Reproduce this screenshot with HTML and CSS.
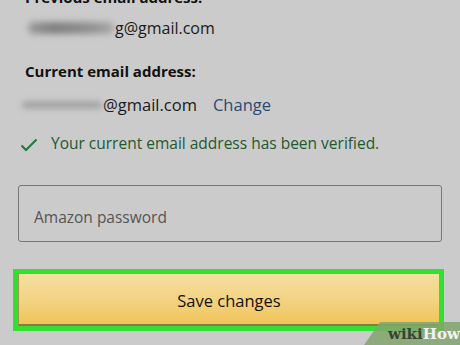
FILE: index.html
```html
<!DOCTYPE html>
<html>
<head>
<meta charset="utf-8">
<link rel="stylesheet" href="styles.css">
</head>
<body>
<div class="page">
  <div class="label cut">Previous email address:</div>
  <div class="email first"><span class="blur blur-a"></span><span>g@gmail.com</span></div>
  <div class="label current">Current email address:</div>
  <div class="email second"><span class="blur blur-b"></span><span>@gmail.com</span><a class="change">Change</a></div>
  <div class="verified">
    <svg class="check" width="18" height="14" viewBox="0 0 18 14"><path d="M1.5 7.5 L6 12 L16.5 1.5" fill="none" stroke="#1f7a3a" stroke-width="2"/></svg>
    <span>Your current email address has been verified.</span>
  </div>
  <div class="input">Amazon password</div>
  <div class="highlight">
    <div class="button">Save changes</div>
  </div>
</div>
<div class="wm"><span class="wiki">wiki</span><span class="how">How</span></div>
</body>
</html>
```
FILE: styles.css
```css
html, body {
  margin: 0;
  padding: 0;
  width: 460px;
  height: 345px;
  overflow: hidden;
  background: #cbcbcb;
}
body {
  font-family: "Open Sans", "Noto Sans", sans-serif;
  color: #111;
  position: relative;
}
.page {
  display: flex;
  flex-direction: column;
}
.label {
  font-weight: 700;
  font-size: 15px;
  line-height: 20px;
  padding-left: 25px;
  color: #111;
}
.cut {
  margin-top: -13px;
}
.email {
  display: flex;
  align-items: center;
  font-size: 16px;
  line-height: 22px;
  color: #1a1a1a;
}
.first {
  margin-top: 10px;
  padding-left: 28px;
}
.blur {
  display: inline-block;
  border-radius: 6px;
  filter: blur(3px);
}
.blur-a {
  width: 86px;
  height: 12px;
  margin-right: 1px;
  background: linear-gradient(90deg, #9a9a9a, #7f7f7f 30%, #8f8f8f 70%, #a8a8a8);
}
.blur-b {
  width: 80px;
  height: 6px;
  margin-right: 1px;
  background: #9a9a9a;
}
.current {
  margin-top: 22px;
}
.second {
  margin-top: 13px;
  padding-left: 22px;
  font-size: 16.5px;
}
.change {
  color: #2b4a78;
  margin-left: 16px;
}
.verified {
  display: flex;
  align-items: center;
  margin-top: 16px;
  padding-left: 20px;
  font-size: 15.5px;
  line-height: 22px;
  color: #23582f;
}
.check {
  margin-right: 13px;
  margin-top: 3px;
}
.input {
  margin: 31px 18px 0 18px;
  height: 57px;
  border: 1px solid #777;
  border-radius: 3px;
  box-sizing: border-box;
  display: flex;
  align-items: center;
  padding-left: 15px;
  padding-top: 7px;
  font-size: 15.5px;
  color: #555;
  width: 424px;
}
.highlight {
  margin: 27px 0 0 13px;
  width: 431px;
  height: 62px;
  box-sizing: border-box;
  border: 5px solid #33e02f;
  display: flex;
}
.button {
  flex: 1;
  display: flex;
  align-items: center;
  justify-content: center;
  background: linear-gradient(180deg, #f5dfa0 0%, #f3d384 50%, #f0c457 100%);
  border-bottom: 2px solid #8a7a40;
  border-left: 1px solid #a89050;
  font-size: 16.5px;
  color: #111;
  padding-top: 2px;
}
.wm {
  position: absolute;
  right: 0;
  bottom: 0;
  width: 96px;
  height: 23px;
  background: rgba(130, 165, 110, 0.85);
  clip-path: polygon(16px 0, 100% 0, 100% 100%, 0 100%);
  font-family: "DejaVu Serif", "Liberation Serif", serif;
  font-weight: 700;
  font-size: 15px;
  line-height: 24px;
  padding-left: 24px;
  box-sizing: border-box;
  white-space: nowrap;
}
.wiki { color: #36452f; }
.how { color: #f2f2f2; }
```
